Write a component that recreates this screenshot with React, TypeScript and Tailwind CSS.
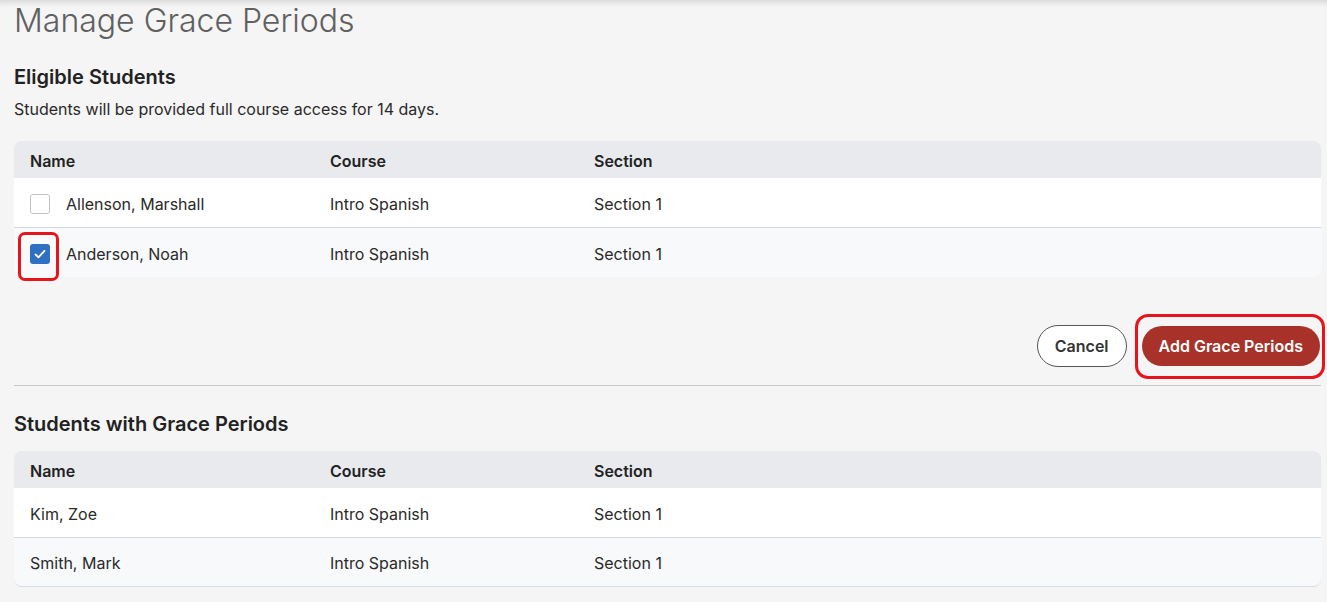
import React from "react";

type Row = { name: string; course: string; section: string; checked?: boolean; annotate?: boolean };

function Checkbox({ checked, annotate }: { checked?: boolean; annotate?: boolean }) {
  return (
    <div className="relative w-[20px] h-[20px] shrink-0">
      {checked ? (
        <div className="w-[20px] h-[20px] rounded-[3px] bg-[#3070c2] flex items-center justify-center">
          <svg width="14" height="14" viewBox="0 0 14 14" fill="none">
            <path d="M2.5 7.5 L5.5 10.3 L11.5 3.8" stroke="white" strokeWidth="1.8" strokeLinecap="round" strokeLinejoin="round" />
          </svg>
        </div>
      ) : (
        <div className="w-[20px] h-[20px] rounded-[3px] bg-white border border-[#c4c4c4]" />
      )}
      {annotate && (
        <div className="absolute left-[-12px] right-[-9px] top-[-12px] bottom-[-17px] border-[3px] border-[#e8141c] rounded-[7px] pointer-events-none" />
      )}
    </div>
  );
}

function Table({ rows, withCheck }: { rows: Row[]; withCheck?: boolean }) {
  return (
    <div>
      <div className="h-[37px] rounded-t-[8px] bg-[#e9eaee] flex items-center pl-[16px] pt-[2px] text-[16px] font-semibold text-[#222]">
        <div className="w-[300px]">Name</div>
        <div className="w-[264px]">Course</div>
        <div>Section</div>
      </div>
      {rows.map((r, i) => (
        <div
          key={r.name}
          className={
            i === 0
              ? "h-[50px] bg-white border-b border-[#d3d9e1] flex items-center pl-[16px] pt-[2px] text-[16px] text-[#2a2a2a]"
              : "h-[49px] rounded-b-[8px] bg-[#f8f9fb] flex items-center pl-[16px] pt-[2px] text-[16px] text-[#2a2a2a]" + (withCheck ? "" : " border-b border-[#d9dce2]")
          }
        >
          <div className="w-[300px] flex items-center gap-[16px]">
            {withCheck && <Checkbox checked={r.checked} annotate={r.annotate} />}
            <span>{r.name}</span>
          </div>
          <div className="w-[264px]">{r.course}</div>
          <div>{r.section}</div>
        </div>
      ))}
    </div>
  );
}

export default function App() {
  const eligible: Row[] = [
    { name: "Allenson, Marshall", course: "Intro Spanish", section: "Section 1" },
    { name: "Anderson, Noah", course: "Intro Spanish", section: "Section 1", checked: true, annotate: true },
  ];
  const withGrace: Row[] = [
    { name: "Kim, Zoe", course: "Intro Spanish", section: "Section 1" },
    { name: "Smith, Mark", course: "Intro Spanish", section: "Section 1" },
  ];
  return (
    <div
      className="w-[1327px] h-[602px] overflow-hidden bg-[#f5f5f5] shadow-[inset_0_7px_6px_-5px_rgba(0,0,0,0.14)] pl-[14px] pr-[6px] pt-[1px]"
      style={{ fontFamily: "Inter, 'Noto Sans', sans-serif" }}
    >
      <h1 className="text-[32px] leading-[40px] font-light text-[#606060]">Manage Grace Periods</h1>
      <h2 className="mt-[22px] text-[20px] leading-[28px] font-semibold text-[#222]">Eligible Students</h2>
      <p className="mt-[7px] text-[16px] leading-[22px] text-[#2a2a2a]">Students will be provided full course access for 14 days.</p>
      <div className="mt-[21px]">
        <Table rows={eligible} withCheck />
      </div>
      <div className="mt-[48px] flex justify-end gap-[15px] pr-[1px]">
        <button className="h-[42px] px-[17px] rounded-full bg-white border border-[#555] text-[16px] font-semibold text-[#333]">
          Cancel
        </button>
        <div className="relative flex items-center">
          <button className="h-[40px] px-[17px] rounded-full bg-[#a8322a] text-[16px] font-semibold text-white">
            Add Grace Periods
          </button>
          <div className="absolute left-[-7px] right-[-5px] top-[-11px] bottom-[-12px] border-[3px] border-[#e8141c] rounded-[13px] pointer-events-none" />
        </div>
      </div>
      <div className="mt-[18px] h-px bg-[#c9c9c9]" />
      <h2 className="mt-[24px] text-[20px] leading-[28px] font-semibold text-[#222]">Students with Grace Periods</h2>
      <div className="mt-[13px]">
        <Table rows={withGrace} />
      </div>
    </div>
  );
}
